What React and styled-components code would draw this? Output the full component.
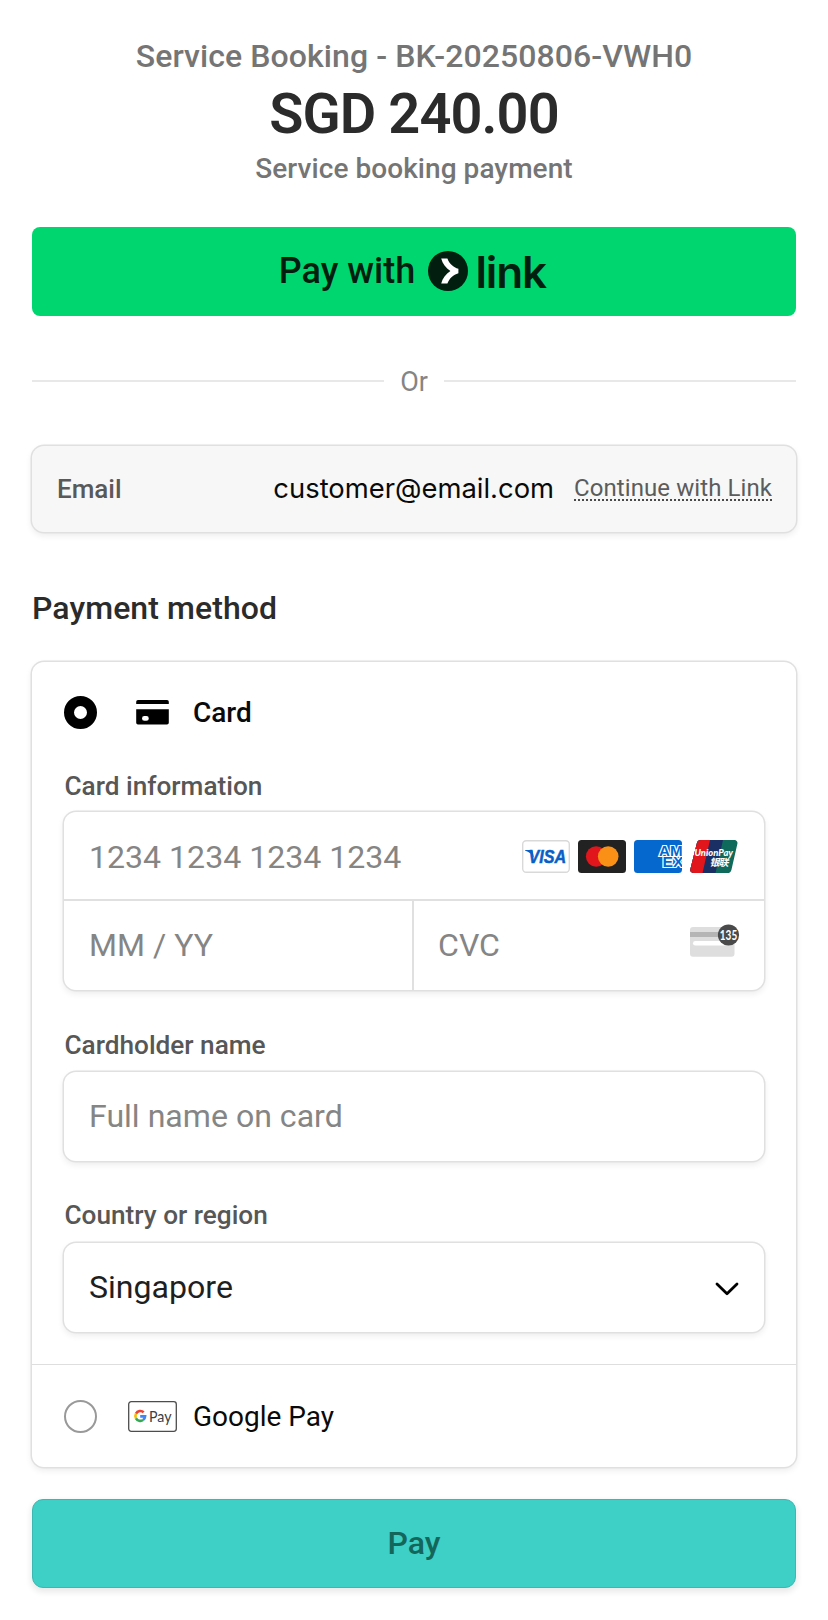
import React from "react";
import styled, { createGlobalStyle } from "styled-components";

const GlobalStyle = createGlobalStyle`
  * {
    box-sizing: border-box;
  }
  body {
    margin: 0;
    background: #fff;
    font-family: Roboto, "Liberation Sans", sans-serif;
    color: #2b2b2b;
  }
  h1, h2, p {
    margin: 0;
    font-weight: 500;
  }
  svg {
    display: block;
    flex-shrink: 0;
    overflow: visible;
  }
`;

// Layout
const Page = styled.main`
  width: 828px;
  min-height: 1620px;
  padding: 37px 32px 32px;
`;

const Summary = styled.header`
  text-align: center;
  color: #757575;
`;

const BookingTitle = styled.p`
  font-size: 32px;
  line-height: 38px;
  letter-spacing: 0.08px;
`;

const Amount = styled.h1`
  font-size: 56px;
  line-height: 78px;
  font-weight: 600;
  letter-spacing: -0.9px;
  color: #2b2b2b;
`;

const Note = styled.p`
  font-size: 28px;
  line-height: 32px;
  letter-spacing: 0.06px;
`;

const LinkButton = styled.button`
  display: flex;
  align-items: center;
  justify-content: center;
  gap: 13px;
  width: 100%;
  height: 89px;
  margin-top: 42px;
  padding: 0 1px 1px 0;
  border: none;
  border-radius: 8px;
  background: #00d66f;
  color: #011e0f;
  font: 500 36px/44px Roboto, sans-serif;
`;

const Divider = styled.div`
  display: flex;
  align-items: center;
  gap: 16px;
  margin-top: 50px;
  font-size: 27px;
  line-height: 30px;
  color: #858585;

  &::before,
  &::after {
    content: "";
    flex: 1;
    height: 2px;
    background: #e8e8e8;
  }
`;

const DividerText = styled.span`
  padding-top: 2px;
  line-height: 28px;
`;

const Surface = styled.div`
  border-radius: 12px;
  background: #fff;
  box-shadow: 0 0 0 1.5px #e0e0e0, 0 3px 6px 1px rgba(0, 0, 0, 0.07);
`;

const EmailRow = styled(Surface)`
  display: flex;
  align-items: center;
  height: 86px;
  margin-top: 50px;
  padding: 0 24px 0 25px;
  background: #f7f7f7;
`;

const EmailLabel = styled.span`
  flex: 1;
  font-size: 26px;
  font-weight: 500;
  color: #595959;
`;

const EmailValue = styled.span`
  margin-right: 20px;
  padding-bottom: 2px;
  font-family: Inter, sans-serif;
  font-size: 27.4px;
  line-height: 32px;
  color: #0a0a0a;
`;

const ContinueLink = styled.a`
  border-bottom: 2px dotted #4a4a4a;
  font-size: 24px;
  line-height: 22px;
  letter-spacing: 0.08px;
  color: #5c5c5c;
`;

const SectionTitle = styled.h2`
  margin: 57px 0 35px;
  font-size: 32px;
  line-height: 38px;
  letter-spacing: 0.08px;
`;

const Method = styled.section`
  padding: ${(p) => (p.$open ? "34px 32px 32px" : "34px 32px")};
  border-top: ${(p) => (p.$open ? "none" : "1px solid #dedede")};
`;

const MethodHead = styled.div`
  display: grid;
  grid-template-columns: 33px 49px auto;
  column-gap: 31px;
  align-items: center;
  justify-items: center;
  justify-content: start;
  height: ${(p) => p.$height || 33}px;
`;

const MethodName = styled.span`
  margin-left: -15px;
  font-size: 28px;
  line-height: 33px;
  font-weight: ${(p) => (p.$active ? 500 : 400)};
  color: #0a0a0a;
`;

const Radio = styled.span`
  width: 33px;
  height: 33px;
  border-radius: 50%;
  border: ${(p) => (p.$checked ? "10px solid #000" : "2px solid #999")};
  background: #fff;
`;

const Label = styled.label`
  display: block;
  margin: ${(p) => p.$top}px 0 ${(p) => p.$bottom}px;
  padding-left: 0.5px;
  font-size: 26.2px;
  line-height: 30px;
  font-weight: 500;
  color: #575757;
`;

const Field = styled(Surface)`
  display: flex;
  align-items: center;
  justify-content: space-between;
  height: 89px;
  padding: 0 25px 2px;
  font-size: 32.1px;
  line-height: 38px;
  color: ${(p) => (p.$filled ? "#1f1f1f" : "#858585")};

  svg {
    margin-top: 5px;
  }
`;

const CardGroup = styled(Surface)`
  display: grid;
  grid-template-columns: 350px 1fr;
  grid-template-rows: 89px 89px;
  height: 178px;
`;

const CardCell = styled.div`
  display: flex;
  align-items: center;
  justify-content: space-between;
  padding: ${(p) => (p.$wide ? "2px 26px 0 25px" : "0 25px 2px 24px")};
  grid-column: ${(p) => (p.$wide ? "1 / -1" : "auto")};
  border-bottom: ${(p) => (p.$wide ? "2px solid #e0e0e0" : "none")};
  border-right: ${(p) => (p.$divided ? "2px solid #e0e0e0" : "none")};
  font-size: 32.1px;
  line-height: 38px;
  color: #858585;
`;

const ExpiryCell = styled(CardCell)`
  padding-left: 25px;
`;

const Brands = styled.div`
  display: flex;
  gap: 8px;
`;

const CvcHint = styled.span`
  margin-bottom: 9px;
`;

const PayButton = styled.button`
  display: block;
  width: 100%;
  height: 89px;
  margin-top: 32px;
  padding: 0 0 2px;
  border: 1px solid #39b9b1;
  border-radius: 11px;
  background: #3ecfc6;
  box-shadow: 0 3px 6px 1px rgba(0, 0, 0, 0.09);
  color: #14665a;
  font: 500 32px/38px Roboto, sans-serif;
`;

// Icons
const LinkLogo = () => (
  <svg width="120" height="44" viewBox="0 0 120 44">
    <circle cx="20" cy="22" r="20" fill="#011e0f" />
    <path
      d="M13.2 9.5h6.2c2 5.3 6 8.900 11 10.300v4.400c-5 1.400-9 5-11 10.300h-6.200c1.300-5.300 4.600-9.500 9.200-12.500-4.600-3-7.900-7.200-9.200-12.500z"
      fill="#fff"
    />
    <text
      x="47.500"
      y="38.700"
      fill="#011e0f"
      fontFamily="Inter, sans-serif"
      fontSize="44"
      fontWeight="600"
      textLength="71.500"
      lengthAdjust="spacing"
    >
      link
    </text>
  </svg>
);

const CardIcon = () => (
  <svg width="33" height="25" viewBox="0 0 33 25">
    <path d="M2 0h29a1.800 1.800 0 0 1 1.800 1.800V4H.2V1.800A1.800 1.800 0 0 1 2 0z" fill="#000" />
    <path
      fillRule="evenodd"
      d="M.2 9.200h32.600v13.600a1.800 1.800 0 0 1-1.800 1.800H2a1.800 1.800 0 0 1-1.800-1.800zM8.400 16a2.400 2.400 0 0 0 0 4.800h2a2.400 2.400 0 0 0 0-4.800z"
      fill="#000"
    />
  </svg>
);

const Visa = () => (
  <svg width="48" height="33" viewBox="0 0 48 33">
    <rect x=".7" y=".7" width="46.600" height="31.600" rx="3.500" fill="#fff" stroke="#d9d9d9" strokeWidth="1.400" />
    <path d="M3 10h5.500c1.400 0 1.900.6 2.200 1.800l1.200 6C10.200 14.300 7 11.500 3 10.400z" fill="#0a5fc7" />
    <text
      x="6.500"
      y="22.800"
      fill="#0a5fc7"
      stroke="#0a5fc7"
      strokeWidth="0.500"
      fontFamily="'Liberation Sans', sans-serif"
      fontSize="18"
      fontWeight="700"
      fontStyle="italic"
      textLength="37.500"
      lengthAdjust="spacingAndGlyphs"
    >
      VISA
    </text>
  </svg>
);

const Mastercard = () => (
  <svg width="48" height="33" viewBox="0 0 48 33">
    <rect width="48" height="33" rx="3.500" fill="#222" />
    <circle cx="18.200" cy="16.500" r="10.300" fill="#e0161c" />
    <circle cx="30.200" cy="16.500" r="10.300" fill="#fb9016" />
  </svg>
);

const Amex = () => (
  <svg width="48" height="33" viewBox="0 0 48 33">
    <clipPath id="amex">
      <rect width="48" height="33" rx="3.500" />
    </clipPath>
    <g clipPath="url(#amex)">
      <rect width="48" height="33" fill="#0568cf" />
      <g
        fill="#0568cf"
        stroke="#fff"
        strokeWidth="2.200"
        paintOrder="stroke"
        fontFamily="'Liberation Sans', sans-serif"
        fontSize="14"
        fontWeight="700"
      >
        <text x="25" y="15.800" textLength="23.500" lengthAdjust="spacingAndGlyphs">AM</text>
        <text x="28.500" y="27" textLength="21" lengthAdjust="spacingAndGlyphs">EX</text>
      </g>
    </g>
  </svg>
);

const UnionPay = () => (
  <svg width="48" height="33" viewBox="0 0 48 33">
    <clipPath id="unionpay">
      <path d="M10.800 0h33.700a3 3 0 0 1 2.900 3.700l-6 26.200A4 4 0 0 1 37.500 33H3.200a3 3 0 0 1-2.900-3.700L6.900 3.100A4 4 0 0 1 10.800 0z" />
    </clipPath>
    <g clipPath="url(#unionpay)">
      <rect width="48" height="33" fill="#0f6a5b" />
      <path d="M0 0h33l-7.500 33H0z" fill="#1a2f63" />
      <path d="M0 0h20l-7.500 33H0z" fill="#e0161c" />
    </g>
    <text
      x="4.500"
      y="15.700"
      fill="#fff"
      fontFamily="Lato, sans-serif"
      fontSize="10"
      fontWeight="900"
      fontStyle="italic"
      textLength="38.500"
      lengthAdjust="spacingAndGlyphs"
    >
      UnionPay
    </text>
    <text
      x="19.500"
      y="26"
      fill="#fff"
      fontFamily="'Noto Sans CJK SC', sans-serif"
      fontSize="10"
      fontWeight="700"
      fontStyle="italic"
      textLength="19"
    >
      银联
    </text>
  </svg>
);

const CvcIcon = () => (
  <svg width="49" height="34" viewBox="0 0 49 34">
    <rect y="4" width="44.500" height="29.700" rx="3" fill="#dedede" />
    <rect y="9" width="44.500" height="5" fill="#b5b5b5" />
    <rect x="3" y="18" width="34" height="4.600" rx="2.300" fill="#fff" />
    <circle cx="38.500" cy="12" r="10.600" fill="#4a4a4a" />
    <text
      x="29.800"
      y="16.700"
      fill="#fff"
      fontFamily="Lato, sans-serif"
      fontSize="13.200"
      fontWeight="700"
      textLength="17.400"
      lengthAdjust="spacingAndGlyphs"
    >
      135
    </text>
  </svg>
);

const Chevron = () => (
  <svg width="24" height="16" viewBox="0 0 24 16">
    <path
      d="M2 3l10 9.800L22 3"
      fill="none"
      stroke="#000"
      strokeWidth="2.800"
      strokeLinecap="round"
      strokeLinejoin="round"
    />
  </svg>
);

const GooglePayIcon = () => (
  <svg width="49" height="31" viewBox="0 0 49 31">
    <rect x=".7" y=".7" width="47.600" height="29.600" rx="2.500" fill="#fff" stroke="#4d4d4d" strokeWidth="1.300" />
    <g fill="none" strokeWidth="2.600">
      <path d="M8 12.700a4.900 4.900 0 0 1 7.700-1.400" stroke="#ea4335" />
      <path d="M8 12.700a4.900 4.900 0 0 0 0 4.600" stroke="#fbbc04" />
      <path d="M8 17.300a4.900 4.900 0 0 0 7.100 1.700" stroke="#34a853" />
      <path d="M15.100 19a4.900 4.900 0 0 0 2-3.600h-4.900" stroke="#4285f4" />
    </g>
    <text
      x="21"
      y="20.500"
      fill="#3c4043"
      fontFamily="Lato, sans-serif"
      fontSize="15"
      textLength="22.500"
      lengthAdjust="spacingAndGlyphs"
    >
      Pay
    </text>
  </svg>
);

const CheckoutPage = () => {
  return (
    <Page>
      <GlobalStyle />

      {/* Summary */}
      <Summary>
        <BookingTitle>Service Booking - BK-20250806-VWH0</BookingTitle>
        <Amount>SGD 240.00</Amount>
        <Note>Service booking payment</Note>
      </Summary>

      {/* Express checkout */}
      <LinkButton type="button">
        Pay with
        <LinkLogo />
      </LinkButton>
      <Divider>
        <DividerText>Or</DividerText>
      </Divider>

      {/* Contact */}
      <EmailRow>
        <EmailLabel>Email</EmailLabel>
        <EmailValue>customer@email.com</EmailValue>
        <ContinueLink>Continue with Link</ContinueLink>
      </EmailRow>

      {/* Payment methods */}
      <SectionTitle>Payment method</SectionTitle>
      <Surface>
        <Method $open>
          <MethodHead>
            <Radio $checked />
            <CardIcon />
            <MethodName $active>Card</MethodName>
          </MethodHead>

          <Label $top={42} $bottom={11}>Card information</Label>
          <CardGroup>
            <CardCell $wide>
              1234 1234 1234 1234
              <Brands>
                <Visa />
                <Mastercard />
                <Amex />
                <UnionPay />
              </Brands>
            </CardCell>
            <ExpiryCell $divided>MM / YY</ExpiryCell>
            <CardCell>
              CVC
              <CvcHint>
                <CvcIcon />
              </CvcHint>
            </CardCell>
          </CardGroup>

          <Label $top={40} $bottom={12}>Cardholder name</Label>
          <Field>Full name on card</Field>

          <Label $top={39} $bottom={13}>Country or region</Label>
          <Field $filled>
            Singapore
            <Chevron />
          </Field>
        </Method>

        <Method>
          <MethodHead $height={34}>
            <Radio />
            <GooglePayIcon />
            <MethodName>Google Pay</MethodName>
          </MethodHead>
        </Method>
      </Surface>

      <PayButton type="button">Pay</PayButton>
    </Page>
  );
};

export default CheckoutPage;
